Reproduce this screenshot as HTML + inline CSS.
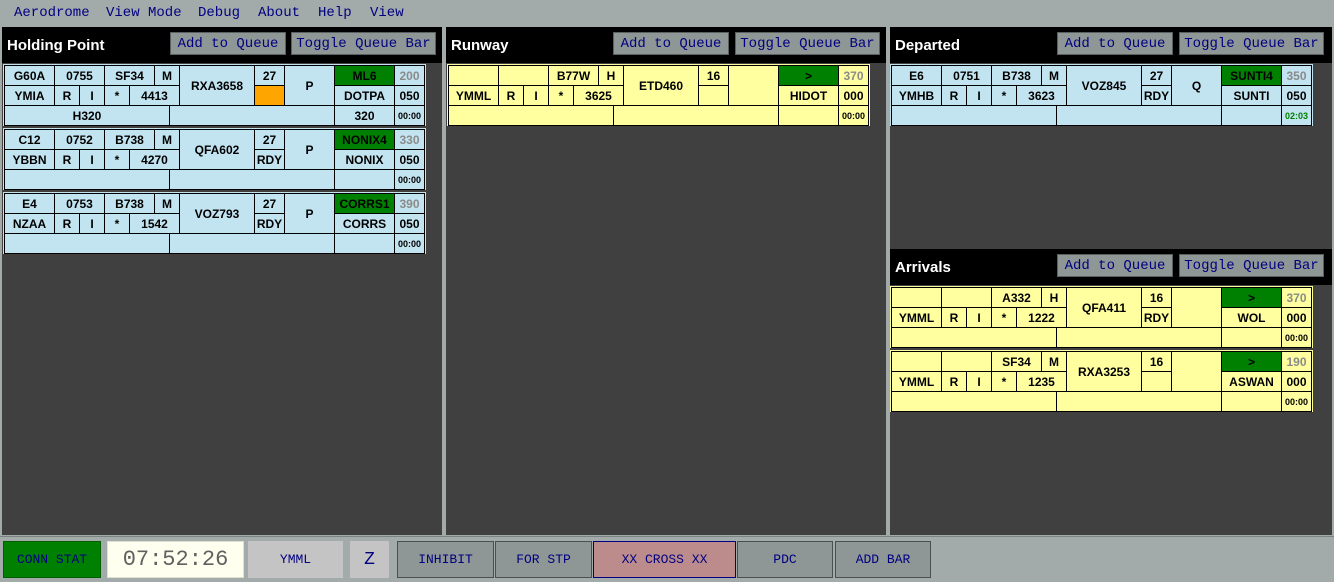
<!DOCTYPE html>
<html><head><meta charset="utf-8"><style>
*{margin:0;padding:0;box-sizing:border-box}
body{width:1334px;height:582px;background:#a2aaaa;position:relative;overflow:hidden;font-family:"Liberation Sans",sans-serif}
.menu{position:absolute;top:5px;font:14px "Liberation Mono",monospace;color:#000080}
.panel{position:absolute;background:#404040}
.hdr{position:absolute;left:0;right:0;height:36px;background:#000}
.ttl{position:absolute;left:5px;top:10px;color:#fff;font:bold 15px "Liberation Sans",sans-serif}
.btn{position:absolute;top:5px;height:23px;background:#8e9696;border:1px solid #5a6060;color:#000080;font:14px "Liberation Mono",monospace;display:flex;align-items:center;justify-content:center;white-space:nowrap}
.s{position:absolute;width:423px;height:62px}
.b{background:#c2e4f0}.y{background:#ffffa0}
.c{position:absolute;border:1px solid #000;display:flex;align-items:center;justify-content:center;font:bold 12px "Liberation Sans",sans-serif;color:#000;white-space:nowrap}
.r1{top:1px;height:21px}.r2{top:21px;height:21px}.r12{top:1px;height:41px}.r3{top:41px;height:21px}
.x0{left:1px;width:51px}.x50{left:51px;width:51px}.x100{left:101px;width:51px}.x150{left:151px;width:26px}.x175{left:176px;width:76px}.x250{left:251px;width:31px}.x280{left:281px;width:51px}.x330{left:331px;width:61px}.x390{left:391px;width:31px}
.y0{left:1px;width:51px}.y50{left:51px;width:26px}.y75{left:76px;width:26px}.y100{left:101px;width:26px}.y125{left:126px;width:51px}
.z0{left:1px;width:166px}.z165{left:166px;width:166px}
.g{background:#008000}.o{background:#ffa500}.gr{color:#8a8a8a}.sm{font-size:9px}.gt{color:#008000}
.bb{position:absolute;top:541px;height:37px;border:1px solid #4a5050;background:#8e9696;color:#000080;font:13px "Liberation Mono",monospace;display:flex;align-items:center;justify-content:center}
</style></head><body>
<div class="menu" style="left:14px">Aerodrome</div>
<div class="menu" style="left:106px">View Mode</div>
<div class="menu" style="left:198px">Debug</div>
<div class="menu" style="left:258px">About</div>
<div class="menu" style="left:318px">Help</div>
<div class="menu" style="left:370px">View</div>

<div class="panel" style="left:2px;top:27px;width:440px;height:508px">
 <div class="hdr" style="top:0"><div class="ttl">Holding Point</div><div class="btn" style="left:168px;width:116px">Add to Queue</div><div class="btn" style="left:289px;width:145px">Toggle Queue Bar</div></div>
</div>
<div class="panel" style="left:446px;top:27px;width:440px;height:508px">
 <div class="hdr" style="top:0"><div class="ttl">Runway</div><div class="btn" style="left:167px;width:116px">Add to Queue</div><div class="btn" style="left:289px;width:145px">Toggle Queue Bar</div></div>
</div>
<div class="panel" style="left:890px;top:27px;width:442px;height:508px">
 <div class="hdr" style="top:0"><div class="ttl">Departed</div><div class="btn" style="left:167px;width:116px">Add to Queue</div><div class="btn" style="left:289px;width:145px">Toggle Queue Bar</div></div>
 <div class="hdr" style="top:222px"><div class="ttl">Arrivals</div><div class="btn" style="left:167px;width:116px">Add to Queue</div><div class="btn" style="left:289px;width:145px">Toggle Queue Bar</div></div>
</div>

<!-- Holding strips -->
<div class="s b" style="left:3px;top:64px">
<div class="c r1 x0">G60A</div><div class="c r1 x50">0755</div><div class="c r1 x100">SF34</div><div class="c r1 x150">M</div><div class="c r12 x175">RXA3658</div><div class="c r1 x250">27</div><div class="c r12 x280">P</div><div class="c r1 x330 g">ML6</div><div class="c r1 x390 gr">200</div>
<div class="c r2 y0">YMIA</div><div class="c r2 y50">R</div><div class="c r2 y75">I</div><div class="c r2 y100">*</div><div class="c r2 y125">4413</div><div class="c r2 x250 o"></div><div class="c r2 x330">DOTPA</div><div class="c r2 x390">050</div>
<div class="c r3 z0">H320</div><div class="c r3 z165"></div><div class="c r3 x330">320</div><div class="c r3 x390 sm">00:00</div>
</div>
<div class="s b" style="left:3px;top:128px">
<div class="c r1 x0">C12</div><div class="c r1 x50">0752</div><div class="c r1 x100">B738</div><div class="c r1 x150">M</div><div class="c r12 x175">QFA602</div><div class="c r1 x250">27</div><div class="c r12 x280">P</div><div class="c r1 x330 g">NONIX4</div><div class="c r1 x390 gr">330</div>
<div class="c r2 y0">YBBN</div><div class="c r2 y50">R</div><div class="c r2 y75">I</div><div class="c r2 y100">*</div><div class="c r2 y125">4270</div><div class="c r2 x250">RDY</div><div class="c r2 x330">NONIX</div><div class="c r2 x390">050</div>
<div class="c r3 z0"></div><div class="c r3 z165"></div><div class="c r3 x330"></div><div class="c r3 x390 sm">00:00</div>
</div>
<div class="s b" style="left:3px;top:192px">
<div class="c r1 x0">E4</div><div class="c r1 x50">0753</div><div class="c r1 x100">B738</div><div class="c r1 x150">M</div><div class="c r12 x175">VOZ793</div><div class="c r1 x250">27</div><div class="c r12 x280">P</div><div class="c r1 x330 g">CORRS1</div><div class="c r1 x390 gr">390</div>
<div class="c r2 y0">NZAA</div><div class="c r2 y50">R</div><div class="c r2 y75">I</div><div class="c r2 y100">*</div><div class="c r2 y125">1542</div><div class="c r2 x250">RDY</div><div class="c r2 x330">CORRS</div><div class="c r2 x390">050</div>
<div class="c r3 z0"></div><div class="c r3 z165"></div><div class="c r3 x330"></div><div class="c r3 x390 sm">00:00</div>
</div>

<!-- Runway -->
<div class="s y" style="left:447px;top:64px">
<div class="c r1 x0"></div><div class="c r1 x50"></div><div class="c r1 x100">B77W</div><div class="c r1 x150">H</div><div class="c r12 x175">ETD460</div><div class="c r1 x250">16</div><div class="c r12 x280"></div><div class="c r1 x330 g">&gt;</div><div class="c r1 x390 gr">370</div>
<div class="c r2 y0">YMML</div><div class="c r2 y50">R</div><div class="c r2 y75">I</div><div class="c r2 y100">*</div><div class="c r2 y125">3625</div><div class="c r2 x250"></div><div class="c r2 x330">HIDOT</div><div class="c r2 x390">000</div>
<div class="c r3 z0"></div><div class="c r3 z165"></div><div class="c r3 x330"></div><div class="c r3 x390 sm">00:00</div>
</div>

<!-- Departed -->
<div class="s b" style="left:890px;top:64px">
<div class="c r1 x0">E6</div><div class="c r1 x50">0751</div><div class="c r1 x100">B738</div><div class="c r1 x150">M</div><div class="c r12 x175">VOZ845</div><div class="c r1 x250">27</div><div class="c r12 x280">Q</div><div class="c r1 x330 g">SUNTI4</div><div class="c r1 x390 gr">350</div>
<div class="c r2 y0">YMHB</div><div class="c r2 y50">R</div><div class="c r2 y75">I</div><div class="c r2 y100">*</div><div class="c r2 y125">3623</div><div class="c r2 x250">RDY</div><div class="c r2 x330">SUNTI</div><div class="c r2 x390">050</div>
<div class="c r3 z0"></div><div class="c r3 z165"></div><div class="c r3 x330"></div><div class="c r3 x390 sm gt">02:03</div>
</div>

<!-- Arrivals -->
<div class="s y" style="left:890px;top:286px">
<div class="c r1 x0"></div><div class="c r1 x50"></div><div class="c r1 x100">A332</div><div class="c r1 x150">H</div><div class="c r12 x175">QFA411</div><div class="c r1 x250">16</div><div class="c r12 x280"></div><div class="c r1 x330 g">&gt;</div><div class="c r1 x390 gr">370</div>
<div class="c r2 y0">YMML</div><div class="c r2 y50">R</div><div class="c r2 y75">I</div><div class="c r2 y100">*</div><div class="c r2 y125">1222</div><div class="c r2 x250">RDY</div><div class="c r2 x330">WOL</div><div class="c r2 x390">000</div>
<div class="c r3 z0"></div><div class="c r3 z165"></div><div class="c r3 x330"></div><div class="c r3 x390 sm">00:00</div>
</div>
<div class="s y" style="left:890px;top:350px">
<div class="c r1 x0"></div><div class="c r1 x50"></div><div class="c r1 x100">SF34</div><div class="c r1 x150">M</div><div class="c r12 x175">RXA3253</div><div class="c r1 x250">16</div><div class="c r12 x280"></div><div class="c r1 x330 g">&gt;</div><div class="c r1 x390 gr">190</div>
<div class="c r2 y0">YMML</div><div class="c r2 y50">R</div><div class="c r2 y75">I</div><div class="c r2 y100">*</div><div class="c r2 y125">1235</div><div class="c r2 x250"></div><div class="c r2 x330">ASWAN</div><div class="c r2 x390">000</div>
<div class="c r3 z0"></div><div class="c r3 z165"></div><div class="c r3 x330"></div><div class="c r3 x390 sm">00:00</div>
</div>

<!-- bottom bar -->
<div style="position:absolute;left:0;top:536px;width:1334px;height:46px;border-top:1px solid #7a8282;background:#a2aaaa"></div>
<div class="bb" style="left:3px;width:98px;background:#008000;border-color:#006000">CONN STAT</div>
<div class="bb" style="left:107px;width:137px;background:#fffff0;border-color:#e0e0d0;color:#606060;font-size:22px">07:52:26</div>
<div class="bb" style="left:248px;width:95px;background:#c4c4c4;border-color:#c4c4c4">YMML</div>
<div class="bb" style="left:350px;width:39px;background:#c4c4c4;border-color:#c4c4c4;font-size:18px">Z</div>
<div class="bb" style="left:397px;width:97px">INHIBIT</div>
<div class="bb" style="left:495px;width:97px">FOR STP</div>
<div class="bb" style="left:593px;width:143px;background:#bc8c8c;border-color:#000080">XX CROSS XX</div>
<div class="bb" style="left:737px;width:96px">PDC</div>
<div class="bb" style="left:835px;width:96px">ADD BAR</div>
</body></html>
